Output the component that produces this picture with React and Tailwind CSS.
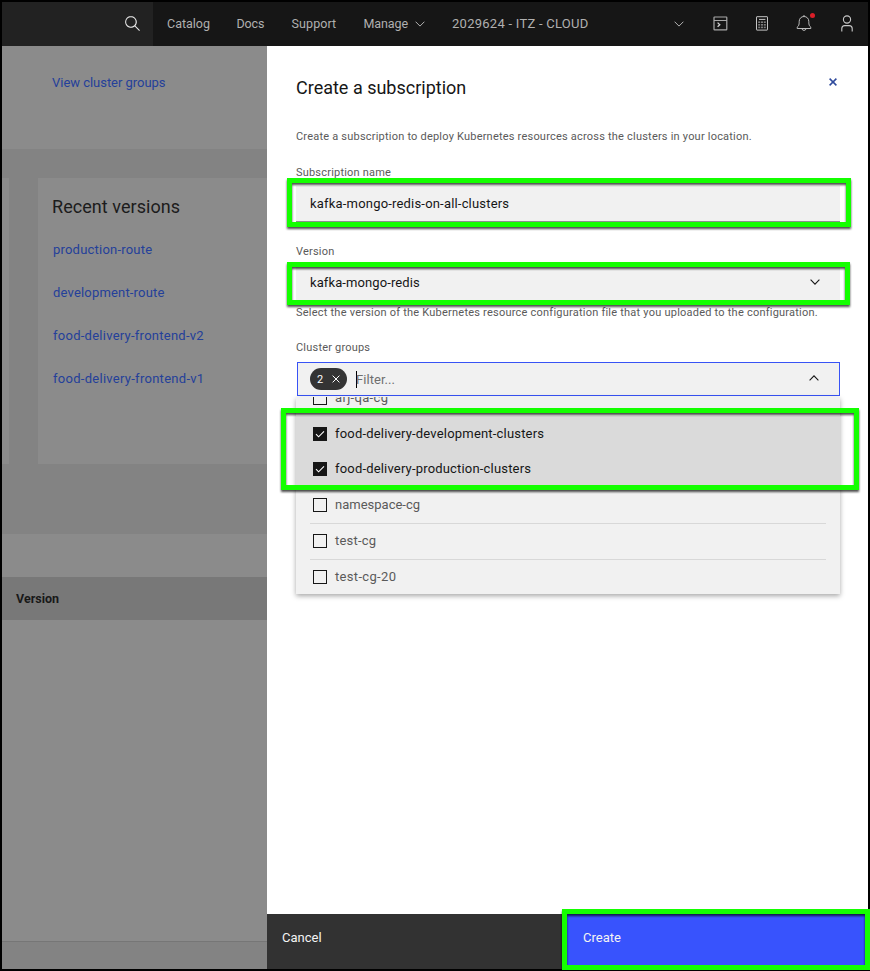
function Chevron({ className }) {
  return (
    <svg viewBox="0 0 10 6" className={className} fill="none" stroke="currentColor">
      <path d="M.6.7 5 5.1 9.4.7" />
    </svg>
  );
}

function SearchIcon() {
  return (
    <svg viewBox="0 0 32 32" className="h-[17px] w-[17px] fill-[#e8e8e8]">
      <path d="M30 28.6l-8.4-8.4a11 11 0 1 0-1.4 1.4l8.4 8.4zM4 13a9 9 0 1 1 9 9 9 9 0 0 1-9-9z" />
    </svg>
  );
}

function TerminalIcon() {
  return (
    <svg viewBox="0 0 15 15" className="h-[15px] w-[15px]" fill="none" stroke="#a8a8a8">
      <rect x="1" y="1" width="12.8" height="12.8" rx=".6" strokeWidth="1.2" />
      <path d="M1 4.5h13" />
      <path d="M4.6 6.6 6.8 8.7l-2.2 2.1" strokeWidth="1.3" stroke="#cfcfcf" />
    </svg>
  );
}

function CalculatorIcon() {
  return (
    <svg viewBox="0 0 12 15" className="h-[15px] w-[12px]">
      <rect x=".5" y=".7" width="11" height="13.4" rx=".4" fill="none" stroke="#c4c4c4" />
      <path d="M3 3.4h6.4" stroke="#c4c4c4" />
      <g fill="#7c7c7c">
        {[5.4, 8, 10.6].map((y) =>
          [2.2, 5, 7.8].map((x) => <rect key={x + "-" + y} x={x} y={y} width="2" height="1.6" />)
        )}
      </g>
    </svg>
  );
}

function BellIcon() {
  return (
    <svg viewBox="0 0 16 17" className="h-[17px] w-[16px]" fill="none" stroke="#bdbdbd">
      <path d="M1.2 13.5v-1.3C2.6 11.1 3.2 9.8 3.2 7.2V6.4C3.2 3.6 5.2 1.5 8 1.5s4.8 2.1 4.8 4.9v.8c0 2.6.6 3.9 2 5v1.3z" strokeLinejoin="round" />
      <path d="M5.9 13.7a2.15 2.15 0 0 0 4.2 0M8 0v1.5" />
    </svg>
  );
}

function UserIcon() {
  return (
    <svg viewBox="0 0 12 17" className="h-[17px] w-[12px]" fill="none" stroke="#c9c9c9" strokeWidth="1.1">
      <circle cx="6" cy="4.5" r="3.6" />
      <path d="M.8 16.6v-3a3 3 0 0 1 3-3h4.4a3 3 0 0 1 3 3v3" />
    </svg>
  );
}

function CloseIcon({ className }) {
  return (
    <svg viewBox="0 0 8 8" className={className} fill="none" stroke="currentColor">
      <path d="M.6.6l6.8 6.8M7.4.6L.6 7.4" />
    </svg>
  );
}

function Header() {
  return (
    <header className="flex h-[44px] shrink-0 bg-[#161616] text-[12.5px] leading-[44px] text-[#b0b0b0]">
      <div className="flex w-[151px] items-center justify-end bg-[#222] pr-[12px] pb-[2px]">
        <SearchIcon />
      </div>
      <nav className="flex whitespace-nowrap pl-[14px]">
        <span className="w-[69.5px]">Catalog</span>
        <span className="w-[55px] tracking-[-0.15px]">Docs</span>
        <span className="w-[72px] tracking-[0.1px]">Support</span>
        <span className="flex w-[88.5px] items-center">
          <span className="w-[51px] tracking-[-0.1px]">Manage</span>
          <Chevron className="h-[6px] w-[10px]" />
        </span>
        <span className="w-[222px] text-[13px] tracking-[0.26px]">2029624 - ITZ - CLOUD</span>
      </nav>
      <div className="flex items-center">
        <Chevron className="h-[6px] w-[10px]" />
        <span className="mb-[2px] ml-[29px]"><TerminalIcon /></span>
        <span className="mb-[2px] ml-[28px]"><CalculatorIcon /></span>
        <span className="relative mb-[1px] ml-[28px]">
          <BellIcon />
          <span className="absolute -top-[2px] left-[14px] h-[5px] w-[5px] rounded-full bg-[#da1e28]" />
        </span>
        <span className="mb-[2px] ml-[28.5px]"><UserIcon /></span>
      </div>
    </header>
  );
}

const versions = [
  ["production-route", "tracking-[0.21px]"],
  ["development-route", "tracking-[0.18px]"],
  ["food-delivery-frontend-v2", "tracking-[0.26px]"],
  ["food-delivery-frontend-v1", "tracking-[0.28px]"],
];

function Background() {
  return (
    <main className="flex w-[265px] flex-col bg-[#8b8b8b] text-[13px] text-[#24409a]">
      <div className="h-[103px] pt-[27px] pl-[50px] leading-[20px] tracking-[-0.03px]">View cluster groups</div>
      <div className="flex h-[385px] gap-[29px] bg-[#838383] pt-[29px] pb-[70px]">
        <div className="w-[7px] bg-[#8b8b8b]" />
        <section className="flex-1 bg-[#8b8b8b] pt-[16px] pl-[15px] whitespace-nowrap">
          <h2 className="-ml-px text-[18px] leading-[26px] tracking-[0.06px] text-[#1c1c1c]">Recent versions</h2>
          <ul className="mt-[8px]">
            {versions.map(([name, tracking]) => (
              <li key={name} className={"h-[43px] leading-[43px] " + tracking}>{name}</li>
            ))}
          </ul>
        </section>
      </div>
      <div className="h-[43px]" />
      <div className="h-[43px] bg-[#787878] pl-[14px] text-[12.5px] leading-[43px] font-bold text-[#181818]">Version</div>
      <div className="flex-1" />
      <div className="h-[28px] border-t border-[#767676] bg-[#838383]" />
    </main>
  );
}

function Checkbox({ checked }) {
  return checked ? (
    <span className="flex h-[14px] w-[14px] items-center justify-center bg-[#161616]">
      <svg viewBox="0 0 10 8" className="h-[8px] w-[10px]" fill="none" stroke="#fff" strokeWidth="1.1">
        <path d="M1 4.2 3.6 6.8 9 1.4" />
      </svg>
    </span>
  ) : (
    <span className="h-[14px] w-[14px] border border-[#161616]" />
  );
}

const groups = [
  { name: "food-delivery-development-clusters", checked: true, tracking: "tracking-[0.19px]", row: "h-[36px]" },
  { name: "food-delivery-production-clusters", checked: true, tracking: "tracking-[0.18px]", row: "h-[35px]", pad: "pb-px" },
  { name: "namespace-cg", tracking: "tracking-normal", row: "h-[37px]", line: true },
  { name: "test-cg", tracking: "tracking-[0.2px]", row: "h-[36px]", line: true, pad: "pb-px" },
  { name: "test-cg-20", tracking: "tracking-[0.33px]", row: "h-[35px]", pad: "pb-px" },
];

function Option({ name, checked, tracking, row, line, pad = "" }) {
  return (
    <li className={"flex shrink-0 " + row + (checked ? " bg-[#dadada] text-[#161616]" : "")}>
      <div className={"mx-[14px] flex flex-1 items-center gap-[8px] pl-[3px] " + pad + (line ? " border-b border-[#d8d8d8]" : "")}>
        <Checkbox checked={checked} />
        <span className={"leading-[18px] " + tracking}>{name}</span>
      </div>
    </li>
  );
}

function Highlight({ className }) {
  return (
    <div className={"pointer-events-none absolute border-[5px] border-[#14ff00] drop-shadow-[0_2px_1px_rgba(0,0,0,0.7)] " + className} />
  );
}

function Panel() {
  return (
    <aside className="flex w-[601px] flex-col bg-white whitespace-nowrap">
      <div className="flex-1 pr-[28px] pl-[29px] text-[11px] tracking-[0.2px] text-[#5a5a5a]">
        <div className="flex items-center justify-between pt-[29px]">
          <h1 className="text-[18px] leading-[26px] tracking-normal text-[#161616]">Create a subscription</h1>
          <CloseIcon className="mr-[3.5px] mb-[13px] h-[8px] w-[8px] stroke-[1.5] text-[#2f4a9c]" />
        </div>
        <p className="mt-[28px] leading-[16px] tracking-[0.21px]">
          Create a subscription to deploy Kubernetes resources across the clusters in your location.
        </p>
        <div className="mt-[20px] leading-[16px]">Subscription name</div>
        <div className="mt-[5px] h-[36px] border-b border-[#8d8d8d] bg-[#f1f1f1] pl-[14px] text-[13px] leading-[36px] tracking-[0.19px] text-[#161616]">
          kafka-mongo-redis-on-all-clusters
        </div>
        <div className="mt-[22px] leading-[16px]">Version</div>
        <div className="mt-[5px] flex h-[36px] items-center justify-between border-b border-[#8d8d8d] bg-[#f1f1f1] pr-[20px] pl-[14px] text-[13px] tracking-[0.1px] text-[#161616]">
          kafka-mongo-redis
          <Chevron className="mb-px h-[6px] w-[10px] stroke-[1.1]" />
        </div>
        <p className="mt-[4px] leading-[16px] tracking-[0.225px]">
          Select the version of the Kubernetes resource configuration file that you uploaded to the configuration.
        </p>
        <div className="mt-[19px] leading-[16px]">Cluster groups</div>
        <div className="mt-[6px] ml-[1px] flex h-[34px] items-center border border-[#3853f5] bg-[#f1f1f1] pr-[20px] pl-[12px] text-[13px] text-[#6f6f6f]">
          <span className="flex h-[22px] w-[37px] items-center justify-between rounded-full bg-[#343434] pr-[7px] pl-[7px] text-[11px] text-white">
            <span className="pt-[2px]">2</span>
            <CloseIcon className="h-[8px] w-[8px]" />
          </span>
          <span className="ml-[9px] h-[17px] w-px bg-black" />
          <span className="-ml-px flex-1 pt-px tracking-[0.05px]">Filter...</span>
          <Chevron className="mb-[2px] h-[6px] w-[10px] rotate-180 stroke-[1.1] text-[#161616]" />
        </div>
        <ul className="mt-[1px] flex h-[197px] flex-col overflow-hidden bg-[#f1f1f1] text-[13px] shadow-[0_2px_5px_rgba(0,0,0,0.35)]">
          <li className="flex h-[19px] shrink-0">
            <div className="-mt-[8px] flex h-[18px] items-center gap-[8px] pl-[17px]">
              <Checkbox />
              <span className="leading-[18px] tracking-[0.33px]">arj-qa-cg</span>
            </div>
          </li>
          {groups.map((group) => (
            <Option key={group.name} {...group} />
          ))}
        </ul>
      </div>
      <footer className="flex h-[55px] text-[13px] leading-[48px] text-[#f4f4f4]">
        <div className="w-[297px] bg-[#323232] pl-[15px]">Cancel</div>
        <div className="flex-1 bg-[#3853fd] pl-[19px]">Create</div>
      </footer>
    </aside>
  );
}

export default function App() {
  return (
    <div className="relative flex h-[971px] w-[870px] flex-col overflow-hidden bg-black p-[2px] font-['Roboto',sans-serif]">
      <Header />
      <div className="flex flex-1">
        <Background />
        <Panel />
      </div>
      <Highlight className="top-[178px] left-[287px] h-[49px] w-[564px]" />
      <Highlight className="top-[262px] left-[287px] h-[43px] w-[563px]" />
      <Highlight className="top-[408px] left-[281px] h-[82px] w-[578px]" />
      <Highlight className="top-[909px] left-[562px] h-[61px] w-[308px]" />
    </div>
  );
}
